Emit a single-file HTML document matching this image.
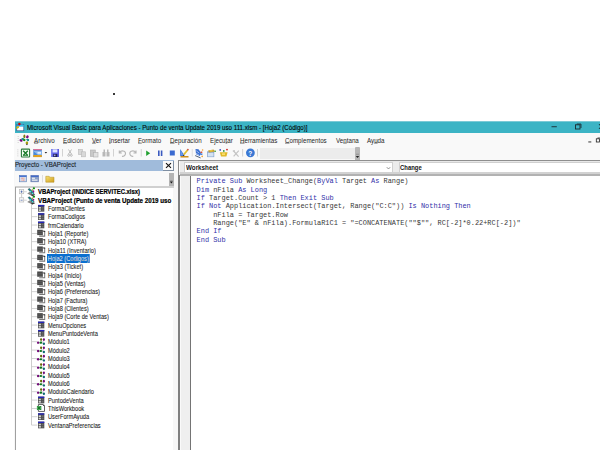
<!DOCTYPE html>
<html><head><meta charset="utf-8">
<style>
*{margin:0;padding:0;box-sizing:border-box}
html,body{width:600px;height:450px;overflow:hidden;background:#fff;position:relative;font-family:"Liberation Sans",sans-serif}
.a{position:absolute}
svg{position:absolute;left:0;top:0}
#dot{left:113px;top:93px;width:2px;height:2px;background:#383838}
#title{left:14.5px;top:121px;width:586px;height:12.5px;background:#3cb4c5}
.tt{position:absolute;left:26.5px;top:122.8px;font-size:6.9px;line-height:10px;color:#000;white-space:nowrap;transform-origin:0 50%;transform:scaleX(0.891);-webkit-text-stroke:0.1px #000}
#menu{left:14px;top:133px;width:586px;height:13px;background:#f9f9f9}
.mi{position:absolute;top:136px;font-size:6.9px;line-height:8px;color:#262626;white-space:nowrap;transform-origin:0 50%;transform:translateY(0.6px) scaleX(0.9)}
#tb{left:14px;top:146px;width:586px;height:14px;background:#f9f9f9}
#tbline{left:174px;top:160px;width:426px;height:1px;background:#8e8e8e}
#tbbox{left:260px;top:148px;width:100px;height:10.5px;background:#ececec}
#tbgrip{left:354.5px;top:147px;width:5.5px;height:13px;background:#b6b6b6;border-radius:1px 1px 0 0}
#projbg{left:14px;top:160px;width:164px;height:290px;background:#f7f7f7}
#ph{left:14.5px;top:160px;width:159.5px;height:11px;background:#a0bbdb}
.pht{position:absolute;left:15px;top:160px;font-size:7.3px;line-height:9px;color:#141a22;-webkit-text-stroke:0.1px #141a22;white-space:nowrap;transform-origin:0 50%;transform:scaleX(0.839)}
#px{left:163.3px;top:161px;width:10.7px;height:10px;background:#fbfbfb;border-right:1px solid #7e8ea2;border-bottom:1px solid #7e8ea2}
#ptb{left:15px;top:171px;width:159px;height:15px;background:#f9f9f9}
#pgrip{left:169px;top:173px;width:5px;height:13px;background:#b4b4b4}
#ptbline{left:15px;top:186px;width:159px;height:1.5px;background:#d0d0d0}
#tree{left:15px;top:187.5px;width:158px;height:263px;background:#fff;overflow:hidden}
#treeL{left:15px;top:187px;width:1px;height:263px;background:#a0a0a0}
#treeclip{left:0;top:0;width:173px;height:450px;overflow:hidden}
.r{position:absolute;font-size:6.5px;line-height:8px;color:#1a1a1a;-webkit-text-stroke:0.08px #1a1a1a;white-space:nowrap;transform-origin:0 50%;transform:scaleX(0.872)}
.rb{font-weight:bold;font-size:6.6px;transform:scaleX(0.893);color:#000;-webkit-text-stroke:0.2px #000}
.sel{background:#0a6fd0;color:#fff;padding:0.5px 1px;margin-left:-0.5px;margin-top:-0.5px}
#code{left:178px;top:160px;width:422px;height:290px;background:#ececec}
#codeL{left:178px;top:175px;width:2px;height:275px;background:#808080}
#codeL0{left:178px;top:160px;width:1px;height:15px;background:#8a8a8a}
#codeT{left:178px;top:160px;width:422px;height:1px;background:#8e8e8e}
#codeH{left:180px;top:161px;width:420px;height:1px;background:#e8e8e8}
#codeH2{left:179px;top:161px;width:1.2px;height:11px;background:#fafafa}
#codeH3{left:180px;top:175px;width:1px;height:275px;background:#fafafa}
.cb{position:absolute;top:162px;height:10px;background:#fff;border:1px solid #d0d0d0;border-bottom:0}
.cbt{position:absolute;top:163.6px;font-size:6.8px;line-height:8px;font-weight:bold;color:#141414;white-space:nowrap;transform-origin:0 50%}
#cband{left:180px;top:172px;width:420px;height:2.3px;background:#d2d2d2}
#cline{left:180px;top:174.3px;width:420px;height:1.5px;background:#b2b2b2}
#margin{left:181px;top:175.8px;width:9px;height:275px;background:#efefef}
#mline{left:190px;top:175.8px;width:1px;height:275px;background:#747474}
#ed{left:191px;top:175.8px;width:409px;height:275px;background:#fff}
.cl{position:absolute;left:196.6px;font-family:"Liberation Mono",monospace;font-size:6.93px;line-height:8px;color:#383838;white-space:pre}
.k{color:#3030a8}
.mi u{text-decoration:underline;text-decoration-thickness:0.5px;text-underline-offset:0.3px;text-decoration-color:#777}
</style></head><body>
<div id="dot" class="a"></div>
<div id="title" class="a"></div><div class="a" style="left:14.5px;top:121px;width:586px;height:1px;background:#7ccad6"></div>
<div class="tt">Microsoft Visual Basic para Aplicaciones - Punto de venta Update 2019 uso 111.xlsm - [Hoja2 (Código)]</div>
<div id="menu" class="a"></div>
<span class="mi" style="left:33.8px"><u>A</u>rchivo</span>
<span class="mi" style="left:63.4px"><u>E</u>dición</span>
<span class="mi" style="left:91.6px"><u>V</u>er</span>
<span class="mi" style="left:109px"><u>I</u>nsertar</span>
<span class="mi" style="left:138px"><u>F</u>ormato</span>
<span class="mi" style="left:170px"><u>D</u>epuración</span>
<span class="mi" style="left:210px">Ejecu<u>t</u>ar</span>
<span class="mi" style="left:240px"><u>H</u>erramientas</span>
<span class="mi" style="left:285.3px"><u>C</u>omplementos</span>
<span class="mi" style="left:336px">Ve<u>n</u>tana</span>
<span class="mi" style="left:367.3px">Ay<u>u</u>da</span>
<div id="tb" class="a"></div>
<div id="tbbox" class="a"></div>
<div id="tbgrip" class="a"></div>
<div id="tbline" class="a"></div>
<div id="projbg" class="a"></div>
<div id="ph" class="a"></div>
<div class="pht">Proyecto - VBAProject</div>
<div id="px" class="a"></div>
<div id="ptb" class="a"></div>
<div id="pgrip" class="a"></div>
<div id="ptbline" class="a"></div>
<div id="tree" class="a"></div>
<div id="treeL" class="a"></div>
<div id="code" class="a"></div>
<div id="codeL" class="a"></div><div id="codeT" class="a"></div><div id="codeH" class="a"></div><div id="codeH2" class="a"></div><div id="codeH3" class="a"></div><div id="codeL0" class="a"></div>
<div class="cb" style="left:184px;width:209px"></div>
<div class="cb" style="left:398.5px;width:210px"></div>
<div class="cbt" style="left:185.6px;transform:scaleX(0.924)">Worksheet</div>
<div class="cbt" style="left:400.3px;transform:scaleX(0.872)">Change</div>
<div id="cband" class="a"></div><div id="cline" class="a"></div>
<div id="margin" class="a"></div>
<div id="mline" class="a"></div>
<div id="ed" class="a"></div>
<div class="cl" style="top:177.30px"><span class="k">Private Sub</span> Worksheet_Change(<span class="k">ByVal</span> Target <span class="k">As</span> Range)</div>
<div class="cl" style="top:185.64px"><span class="k">Dim</span> nFila <span class="k">As Long</span></div>
<div class="cl" style="top:193.98px"><span class="k">If</span> Target.Count &gt; 1 <span class="k">Then Exit Sub</span></div>
<div class="cl" style="top:202.32px"><span class="k">If Not</span> Application.Intersect(Target, Range("C:C")) <span class="k">Is Nothing Then</span></div>
<div class="cl" style="top:210.66px">    nFila = Target.Row</div>
<div class="cl" style="top:219.00px">    Range("E" &amp; nFila).FormulaR1C1 = "=CONCATENATE(""$"", RC[-2]*0.22+RC[-2])"</div>
<div class="cl" style="top:227.34px"><span class="k">End If</span></div>
<div class="cl" style="top:235.68px"><span class="k">End Sub</span></div>
<div id="treeclip" class="a">
<div class="r rb" style="left:38px;top:188.20px">VBAProject (INDICE SERVITEC.xlsx)</div>
<div class="r rb" style="left:38px;top:196.53px;transform:scaleX(0.94)">VBAProject (Punto de venta Update 2019 uso 111.xlsm)</div>
<div class="r" style="left:47.5px;top:204.87px">FormaClientes</div>
<div class="r" style="left:47.5px;top:213.20px">FormaCodigos</div>
<div class="r" style="left:47.5px;top:221.54px">frmCalendario</div>
<div class="r" style="left:47.5px;top:229.88px">Hoja1 (Reporte)</div>
<div class="r" style="left:47.5px;top:238.21px">Hoja10 (XTRA)</div>
<div class="r" style="left:47.5px;top:246.54px">Hoja11 (Inventario)</div>
<div class="r sel" style="left:47.5px;top:254.88px">Hoja2 (Codigos)</div>
<div class="r" style="left:47.5px;top:263.22px">Hoja3 (Ticket)</div>
<div class="r" style="left:47.5px;top:271.55px">Hoja4 (Inicio)</div>
<div class="r" style="left:47.5px;top:279.88px">Hoja5 (Ventas)</div>
<div class="r" style="left:47.5px;top:288.22px">Hoja6 (Preferencias)</div>
<div class="r" style="left:47.5px;top:296.56px">Hoja7 (Factura)</div>
<div class="r" style="left:47.5px;top:304.89px">Hoja8 (Clientes)</div>
<div class="r" style="left:47.5px;top:313.23px">Hoja9 (Corte de Ventas)</div>
<div class="r" style="left:47.5px;top:321.56px">MenuOpciones</div>
<div class="r" style="left:47.5px;top:329.89px">MenuPuntodeVenta</div>
<div class="r" style="left:47.5px;top:338.23px">Módulo1</div>
<div class="r" style="left:47.5px;top:346.56px">Módulo2</div>
<div class="r" style="left:47.5px;top:354.90px">Módulo3</div>
<div class="r" style="left:47.5px;top:363.24px">Módulo4</div>
<div class="r" style="left:47.5px;top:371.57px">Módulo5</div>
<div class="r" style="left:47.5px;top:379.90px">Módulo6</div>
<div class="r" style="left:47.5px;top:388.24px">ModuloCalendario</div>
<div class="r" style="left:47.5px;top:396.58px">PuntodeVenta</div>
<div class="r" style="left:47.5px;top:404.91px">ThisWorkbook</div>
<div class="r" style="left:47.5px;top:413.25px">UserFormAyuda</div>
<div class="r" style="left:47.5px;top:421.58px">VentanaPreferencias</div>
</div>
<svg width="600" height="450" viewBox="0 0 600 450">
<!-- title icon -->
<rect x="16.8" y="124.6" width="7" height="6.2" fill="#fff" stroke="#2a4a80" stroke-width="0.6"/>
<rect x="16.8" y="124.6" width="7" height="1.9" fill="#2a90e0"/>
<rect x="20" y="124.8" width="3.5" height="1.4" fill="#30c8e8"/>
<ellipse cx="17.6" cy="127.4" rx="1.6" ry="1.1" transform="rotate(-35 17.6 127.4)" fill="#c8b810"/>
<circle cx="19.4" cy="123.9" r="1.25" fill="#d00808"/>
<!-- window controls -->
<rect x="551.5" y="126.3" width="5.3" height="0.9" fill="#1a2a30"/>
<rect x="575.5" y="124.8" width="4.5" height="4.2" fill="none" stroke="#1a2a30" stroke-width="0.9"/>
<path d="M576.8 124 L581 124 L581 128" fill="none" stroke="#1a2a30" stroke-width="0.8"/>
<path d="M599 124 L603 129 M603 124 L599 129" stroke="#1a2a30" stroke-width="0.9"/>
<!-- menu right small controls -->
<rect x="588.3" y="141.5" width="3" height="0.9" fill="#222"/>
<rect x="596.3" y="138.8" width="3.2" height="3.2" fill="none" stroke="#222" stroke-width="0.8"/>
<path d="M597.5 138 L600 138" stroke="#222" stroke-width="0.8"/>
<!-- grips -->
<g fill="#b8b8b8">
<rect x="17.7" y="136" width="0.9" height="0.7"/><rect x="17.7" y="138.1" width="0.9" height="0.7"/><rect x="17.7" y="140.2" width="0.9" height="0.7"/><rect x="17.7" y="142.3" width="0.9" height="0.7"/>
<rect x="17.5" y="149.5" width="0.8" height="0.8"/><rect x="17.5" y="151.5" width="0.8" height="0.8"/><rect x="17.5" y="153.5" width="0.8" height="0.8"/><rect x="17.5" y="155.5" width="0.8" height="0.8"/>
</g>
<!-- menu VBA icon -->
<g transform="translate(24.5 140) scale(1.15) translate(-24.5 -140)">
<ellipse cx="24.4" cy="136.9" rx="0.9" ry="1.6" fill="#7a7a10"/>
<ellipse cx="27" cy="137.2" rx="1.1" ry="1.3" transform="rotate(30 27 137.2)" fill="#7a0a80"/>
<ellipse cx="21.5" cy="140.3" rx="1.4" ry="1.1" transform="rotate(30 21.5 140.3)" fill="#7a0a80"/>
<ellipse cx="23" cy="139.2" rx="1.3" ry="0.9" fill="#108a90"/>
<ellipse cx="27.2" cy="140" rx="1.4" ry="1.1" fill="#108a90"/>
<ellipse cx="24.3" cy="140.1" rx="1.2" ry="1" fill="#108a10"/>
<rect x="25.6" y="139.8" width="1.2" height="1.2" fill="#e0f0f0"/>
<ellipse cx="26.6" cy="142.5" rx="1.1" ry="1.2" fill="#a8a010"/>
<rect x="26.1" y="143.4" width="1" height="1" fill="#222"/>
</g>
<!-- toolbar icons -->
<rect x="21.4" y="149.1" width="8.2" height="7.9" rx="0.6" fill="#f4fff4" stroke="#2a7a3a" stroke-width="1.1"/>
<path d="M23.2 150.8 L27.8 155.4 M27.8 150.8 L23.2 155.4" stroke="#1a7a2a" stroke-width="1.4"/><rect x="23" y="155" width="5" height="0.8" fill="#2a8a3a"/>
<rect x="33.3" y="149" width="8.5" height="8" fill="#4a8ad8"/>
<rect x="33.3" y="149" width="8.5" height="1.2" fill="#d8709a"/>
<rect x="33.3" y="155" width="8.5" height="2.1" fill="#e0a020"/>
<path d="M33.3 151 L41.8 151 L41.8 155 L38 155 Z" fill="#8ab8f0"/><rect x="37.5" y="152" width="3.5" height="1.8" fill="#e4eefc"/>
<path d="M44.6 152 L47.2 152 L45.9 153.4 Z" fill="#222"/>
<rect x="51" y="149" width="8" height="8" fill="#5c5ee0"/><rect x="51" y="149" width="1.5" height="8" fill="#7a80f0"/>
<rect x="52.6" y="149.3" width="4.8" height="3.2" fill="#e0e4ff"/>
<rect x="53.3" y="154" width="4" height="3" fill="#202058"/><rect x="54.2" y="154.6" width="1.2" height="1.6" fill="#c0c8f0"/>
<rect x="62.2" y="149" width="0.8" height="7.5" fill="#c8c8c8"/>
<g fill="none" stroke="#b4b4b4" stroke-width="0.9">
<path d="M68.5 149.5 L71.5 154 M71.5 149.5 L68.5 154"/>
<circle cx="68.7" cy="155.3" r="1"/><circle cx="71.3" cy="155.3" r="1"/>
</g>
<rect x="78.5" y="149.5" width="4" height="5" fill="#d8d8d8" stroke="#b8b8b8" stroke-width="0.6"/>
<rect x="81.5" y="151.8" width="4" height="5" fill="#d8d8d8" stroke="#b8b8b8" stroke-width="0.6"/>
<rect x="90.3" y="150" width="5" height="6.5" fill="#c8c8c8" stroke="#b0b0b0" stroke-width="0.6"/>
<rect x="93.5" y="152.5" width="4.5" height="4.5" fill="#e0e0e0" stroke="#b0b0b0" stroke-width="0.6"/>
<g fill="#b8b8b8"><rect x="102.5" y="152" width="3" height="4.5"/><rect x="106.5" y="152" width="3" height="4.5"/><rect x="103.5" y="149.5" width="1.5" height="3"/><rect x="107" y="149.5" width="1.5" height="3"/></g>
<rect x="113.2" y="149" width="0.8" height="7.5" fill="#c8c8c8"/>
<path d="M119.3 150.5 L119.3 153 L121.8 153 M119.6 152.7 C121 150 125.5 150.5 125.5 153.5 C125.5 155.5 123.5 156.5 122 156.3" fill="none" stroke="#b4b4b4" stroke-width="1.1"/>
<path d="M136 150.5 L136 153 L133.5 153 M135.7 152.7 C134.3 150 129.8 150.5 129.8 153.5 C129.8 155.5 131.8 156.5 133.3 156.3" fill="none" stroke="#b4b4b4" stroke-width="1.1"/>
<rect x="140.8" y="149" width="0.8" height="7.5" fill="#c8c8c8"/>
<path d="M146.2 150.5 L150.2 153.2 L146.2 156 Z" fill="#20a030"/>
<rect x="158" y="150.5" width="1.6" height="5.5" fill="#3a5ac0"/><rect x="160.8" y="150.5" width="1.6" height="5.5" fill="#3a5ac0"/>
<rect x="169.8" y="150.5" width="5" height="5" fill="#3a6ad0"/>
<path d="M180.2 149 L180.2 156 L184.8 156 Z" fill="#3a72d8"/>
<path d="M181 151 L181 155.3 L183.3 155.3 Z" fill="#6a9ae8"/>
<path d="M183.8 154.6 L187.6 150" stroke="#e0c030" stroke-width="1.7"/>
<circle cx="187.9" cy="149.6" r="0.9" fill="#d05040"/>
<rect x="183" y="155" width="1" height="0.9" fill="#333"/>
<rect x="180.5" y="156" width="8" height="1.5" fill="#d09018"/>
<rect x="191.8" y="149" width="0.8" height="7.5" fill="#d8d8d8"/>
<path d="M195.5 149 L198.5 149.3 L201 152.8 L199.8 156 L196 154.2 Z" fill="#3a70d0"/>
<path d="M196.3 150.8 L199.2 153 M196 153.2 L199 155.2" stroke="#e0e8ff" stroke-width="0.6"/>
<path d="M195.2 155.6 L200.6 157.9" stroke="#40506a" stroke-width="0.9"/>
<rect x="200.6" y="151.5" width="1.7" height="1.6" fill="#e05030"/>
<rect x="200.2" y="153.4" width="2.2" height="1.6" fill="#4a86e0"/>
<circle cx="202.6" cy="150" r="0.8" fill="#f0a030"/>
<circle cx="202.2" cy="156.4" r="0.8" fill="#f0a030"/>
<rect x="207.2" y="151.3" width="7" height="5.8" fill="#7a9ac8"/>
<rect x="207.8" y="152.6" width="5.8" height="4" fill="#d4e2f2"/>
<path d="M208 150.6 L213.5 149.6 L215.2 151.4 L209 152.4 Z" fill="#c8a030"/>
<rect x="210" y="150.2" width="2.5" height="1.2" fill="#f0d050"/>
<circle cx="215.2" cy="151.2" r="0.8" fill="#30a040"/>
<path d="M219.8 152.2 L227.6 152.2 L226.4 156.6 L221 156.6 Z" fill="#e0b828"/>
<rect x="222" y="153.3" width="3" height="1.8" fill="#f8e070"/>
<circle cx="220.2" cy="149.9" r="0.85" fill="#3040c0"/>
<circle cx="223.8" cy="150.9" r="0.85" fill="#209030"/>
<circle cx="227" cy="149.6" r="0.9" fill="#d02020"/>
<path d="M233.6 151 L238.6 156.6 M238.8 150.6 L233.6 156.4" stroke="#c4c4c4" stroke-width="1.2"/>
<rect x="232.8" y="150.2" width="2.2" height="1.6" fill="#c8c8c8"/>
<rect x="242.3" y="149" width="0.8" height="7.5" fill="#c8c8c8"/>
<circle cx="250.4" cy="152.8" r="4.4" fill="#3a78d4"/>
<text x="250.3" y="155.6" font-family="Liberation Sans" font-weight="bold" font-size="6.5" fill="#fff" text-anchor="middle">?</text>
<rect x="257.2" y="149" width="0.8" height="7.5" fill="#c8c8c8"/>
<rect x="356" y="153.8" width="3" height="0.8" fill="#888"/><path d="M355.8 156 L359.2 156 L357.5 158 Z" fill="#222"/>
<!-- project header X -->
<path d="M166 163.2 L171 167.8 M171 163.2 L166 167.8" stroke="#111" stroke-width="1.1"/>
<!-- project toolbar icons -->
<rect x="19.3" y="175.6" width="7.2" height="6.2" fill="#d0dcf0" stroke="#5a7ab0" stroke-width="0.6"/>
<rect x="19.3" y="175.6" width="7.2" height="1.3" fill="#3a6ad0"/>
<rect x="21.3" y="177.6" width="1.5" height="1.5" fill="#e8a0a0"/><rect x="23" y="177.6" width="1.5" height="1.5" fill="#f0c0a0"/><rect x="21.3" y="179.4" width="1.5" height="1.5" fill="#f0c0b0"/><rect x="23" y="179.4" width="1.5" height="1.5" fill="#e8a8a8"/>
<rect x="30.9" y="175.6" width="7.6" height="6.2" fill="#8aa0c8" stroke="#5a70a8" stroke-width="0.6"/>
<rect x="30.9" y="175.6" width="7.6" height="1.3" fill="#3a64c8"/>
<rect x="32" y="177.7" width="3" height="1.1" fill="#f4f4f4"/><rect x="32" y="179.6" width="5.5" height="1.1" fill="#f4f4f4"/>
<rect x="42.2" y="175" width="0.8" height="7.5" fill="#d8d8d8"/>
<defs><linearGradient id="fg" x1="0" y1="0" x2="1" y2="1"><stop offset="0" stop-color="#f8e070"/><stop offset="1" stop-color="#d0a020"/></linearGradient></defs>
<path d="M45.8 176.3 L49 176.3 L50 177.2 L54 177.2 L54 182.2 L45.8 182.2 Z" fill="url(#fg)" stroke="#b08a20" stroke-width="0.5"/>
<rect x="170.2" y="180" width="2.4" height="0.7" fill="#888"/><path d="M169.9 181.6 L172.9 181.6 L171.4 183.4 Z" fill="#111"/>
<!-- combo chevron -->
<path d="M386.8 167.2 L388.5 169 L390.2 167.2" fill="none" stroke="#666" stroke-width="0.7"/>
<!-- tree -->
<rect x="31" y="203.5" width="0.9" height="221.58000000000004" fill="#c8c8c8"/>
<rect x="21.2" y="193.7" width="0.9" height="4.3" fill="#c8c8c8"/>
<rect x="19.5" y="189.39999999999998" width="4.2" height="4.3" fill="#f6f6f6" stroke="#bdbdbd" stroke-width="0.7"/>
<rect x="20.6" y="191.5" width="2" height="0.6" fill="#3050a0"/>
<rect x="21.3" y="190.5" width="0.6" height="2.4" fill="#3050a0"/>
<rect x="23.8" y="191.39999999999998" width="3" height="0.8" fill="#c8c8c8"/>
<path d="M27.2 193.6 L29.8 191.8 L35.2 194.6 L32.4 196.2 Z" fill="#8a8a8a"/><path d="M30.5 194.5 L35.2 194.6 L32.4 196.2 Z" fill="#3a3a3a"/><path d="M28 189.2 L29.6 188.4 L34.2 193.2 L32.6 194.2 Z" fill="#0e7e86" stroke="#203030" stroke-width="0.4"/><rect x="29.9" y="190.9" width="1.3" height="1.3" fill="#50e8e8"/><rect x="31.9" y="192.8" width="1.3" height="1.3" fill="#50e8e8"/><circle cx="33.9" cy="188.3" r="1.15" fill="#108a10"/><circle cx="32.3" cy="189.9" r="0.75" fill="#8a8a10"/><ellipse cx="33.5" cy="191.4" rx="0.8" ry="1.1" fill="#8a108a"/>
<rect x="19.5" y="197.73499999999999" width="4.2" height="4.3" fill="#f6f6f6" stroke="#bdbdbd" stroke-width="0.7"/>
<rect x="20.6" y="199.835" width="2" height="0.6" fill="#3050a0"/>
<rect x="23.8" y="199.73499999999999" width="3" height="0.8" fill="#c8c8c8"/>
<path d="M27.2 201.935 L29.8 200.13500000000002 L35.2 202.935 L32.4 204.535 Z" fill="#8a8a8a"/><path d="M30.5 202.835 L35.2 202.935 L32.4 204.535 Z" fill="#3a3a3a"/><path d="M28 197.535 L29.6 196.735 L34.2 201.535 L32.6 202.535 Z" fill="#0e7e86" stroke="#203030" stroke-width="0.4"/><rect x="29.9" y="199.235" width="1.3" height="1.3" fill="#50e8e8"/><rect x="31.9" y="201.13500000000002" width="1.3" height="1.3" fill="#50e8e8"/><circle cx="33.9" cy="196.63500000000002" r="1.15" fill="#108a10"/><circle cx="32.3" cy="198.235" r="0.75" fill="#8a8a10"/><ellipse cx="33.5" cy="199.735" rx="0.8" ry="1.1" fill="#8a108a"/>
<rect x="31.5" y="207.97" width="5.8" height="0.8" fill="#c8c8c8"/>
<rect x="38" y="204.92000000000002" width="6.3" height="6.7" fill="#4a4a4a"/><rect x="38" y="204.92000000000002" width="6.3" height="1.4" fill="#2626b8"/><rect x="38.7" y="207.02" width="2.2" height="1.6" fill="#d4d4d4"/><rect x="38.7" y="209.32000000000002" width="2.2" height="1.6" fill="#d4d4d4"/><rect x="41.6" y="207.02" width="2" height="1.6" fill="#6a6a6a"/><rect x="41.6" y="209.32000000000002" width="2" height="1.6" fill="#6a6a6a"/>
<rect x="31.5" y="216.30499999999998" width="5.8" height="0.8" fill="#c8c8c8"/>
<rect x="38" y="213.255" width="6.3" height="6.7" fill="#4a4a4a"/><rect x="38" y="213.255" width="6.3" height="1.4" fill="#2626b8"/><rect x="38.7" y="215.355" width="2.2" height="1.6" fill="#d4d4d4"/><rect x="38.7" y="217.655" width="2.2" height="1.6" fill="#d4d4d4"/><rect x="41.6" y="215.355" width="2" height="1.6" fill="#6a6a6a"/><rect x="41.6" y="217.655" width="2" height="1.6" fill="#6a6a6a"/>
<rect x="31.5" y="224.64" width="5.8" height="0.8" fill="#c8c8c8"/>
<rect x="38" y="221.59" width="6.3" height="6.7" fill="#4a4a4a"/><rect x="38" y="221.59" width="6.3" height="1.4" fill="#2626b8"/><rect x="38.7" y="223.69" width="2.2" height="1.6" fill="#d4d4d4"/><rect x="38.7" y="225.99" width="2.2" height="1.6" fill="#d4d4d4"/><rect x="41.6" y="223.69" width="2" height="1.6" fill="#6a6a6a"/><rect x="41.6" y="225.99" width="2" height="1.6" fill="#6a6a6a"/>
<rect x="31.5" y="232.975" width="5.8" height="0.8" fill="#c8c8c8"/>
<path d="M42.6 230.575 L44.4 230.575 L45.2 231.575 L45.2 236.675 L39.2 236.675 L39.2 235.575 L42.6 235.575 Z" fill="#777"/><rect x="42.7" y="231.975" width="1.5" height="3.6" fill="#fff"/><rect x="37.2" y="229.775" width="5.6" height="5.3" fill="#4a4a4a"/><rect x="37.2" y="231.375" width="5.6" height="0.5" fill="#666"/><rect x="37.2" y="233.075" width="5.6" height="0.5" fill="#666"/><rect x="44.2" y="230.975" width="1" height="1" fill="#222"/>
<rect x="31.5" y="241.30999999999997" width="5.8" height="0.8" fill="#c8c8c8"/>
<path d="M42.6 238.90999999999997 L44.4 238.90999999999997 L45.2 239.90999999999997 L45.2 245.01 L39.2 245.01 L39.2 243.90999999999997 L42.6 243.90999999999997 Z" fill="#777"/><rect x="42.7" y="240.30999999999997" width="1.5" height="3.6" fill="#fff"/><rect x="37.2" y="238.10999999999999" width="5.6" height="5.3" fill="#4a4a4a"/><rect x="37.2" y="239.70999999999998" width="5.6" height="0.5" fill="#666"/><rect x="37.2" y="241.40999999999997" width="5.6" height="0.5" fill="#666"/><rect x="44.2" y="239.30999999999997" width="1" height="1" fill="#222"/>
<rect x="31.5" y="249.64499999999998" width="5.8" height="0.8" fill="#c8c8c8"/>
<path d="M42.6 247.24499999999998 L44.4 247.24499999999998 L45.2 248.24499999999998 L45.2 253.345 L39.2 253.345 L39.2 252.24499999999998 L42.6 252.24499999999998 Z" fill="#777"/><rect x="42.7" y="248.64499999999998" width="1.5" height="3.6" fill="#fff"/><rect x="37.2" y="246.445" width="5.6" height="5.3" fill="#4a4a4a"/><rect x="37.2" y="248.045" width="5.6" height="0.5" fill="#666"/><rect x="37.2" y="249.74499999999998" width="5.6" height="0.5" fill="#666"/><rect x="44.2" y="247.64499999999998" width="1" height="1" fill="#222"/>
<rect x="31.5" y="257.98" width="5.8" height="0.8" fill="#c8c8c8"/>
<path d="M42.6 255.57999999999998 L44.4 255.57999999999998 L45.2 256.58 L45.2 261.68 L39.2 261.68 L39.2 260.58 L42.6 260.58 Z" fill="#777"/><rect x="42.7" y="256.98" width="1.5" height="3.6" fill="#fff"/><rect x="37.2" y="254.78" width="5.6" height="5.3" fill="#4a4a4a"/><rect x="37.2" y="256.38" width="5.6" height="0.5" fill="#666"/><rect x="37.2" y="258.08" width="5.6" height="0.5" fill="#666"/><rect x="44.2" y="255.98" width="1" height="1" fill="#222"/>
<rect x="31.5" y="266.31500000000005" width="5.8" height="0.8" fill="#c8c8c8"/>
<path d="M42.6 263.915 L44.4 263.915 L45.2 264.915 L45.2 270.01500000000004 L39.2 270.01500000000004 L39.2 268.915 L42.6 268.915 Z" fill="#777"/><rect x="42.7" y="265.31500000000005" width="1.5" height="3.6" fill="#fff"/><rect x="37.2" y="263.115" width="5.6" height="5.3" fill="#4a4a4a"/><rect x="37.2" y="264.71500000000003" width="5.6" height="0.5" fill="#666"/><rect x="37.2" y="266.415" width="5.6" height="0.5" fill="#666"/><rect x="44.2" y="264.31500000000005" width="1" height="1" fill="#222"/>
<rect x="31.5" y="274.65000000000003" width="5.8" height="0.8" fill="#c8c8c8"/>
<path d="M42.6 272.25 L44.4 272.25 L45.2 273.25 L45.2 278.35 L39.2 278.35 L39.2 277.25 L42.6 277.25 Z" fill="#777"/><rect x="42.7" y="273.65000000000003" width="1.5" height="3.6" fill="#fff"/><rect x="37.2" y="271.45" width="5.6" height="5.3" fill="#4a4a4a"/><rect x="37.2" y="273.05" width="5.6" height="0.5" fill="#666"/><rect x="37.2" y="274.75" width="5.6" height="0.5" fill="#666"/><rect x="44.2" y="272.65000000000003" width="1" height="1" fill="#222"/>
<rect x="31.5" y="282.985" width="5.8" height="0.8" fill="#c8c8c8"/>
<path d="M42.6 280.585 L44.4 280.585 L45.2 281.585 L45.2 286.685 L39.2 286.685 L39.2 285.585 L42.6 285.585 Z" fill="#777"/><rect x="42.7" y="281.985" width="1.5" height="3.6" fill="#fff"/><rect x="37.2" y="279.78499999999997" width="5.6" height="5.3" fill="#4a4a4a"/><rect x="37.2" y="281.385" width="5.6" height="0.5" fill="#666"/><rect x="37.2" y="283.085" width="5.6" height="0.5" fill="#666"/><rect x="44.2" y="280.985" width="1" height="1" fill="#222"/>
<rect x="31.5" y="291.32000000000005" width="5.8" height="0.8" fill="#c8c8c8"/>
<path d="M42.6 288.92 L44.4 288.92 L45.2 289.92 L45.2 295.02000000000004 L39.2 295.02000000000004 L39.2 293.92 L42.6 293.92 Z" fill="#777"/><rect x="42.7" y="290.32000000000005" width="1.5" height="3.6" fill="#fff"/><rect x="37.2" y="288.12" width="5.6" height="5.3" fill="#4a4a4a"/><rect x="37.2" y="289.72" width="5.6" height="0.5" fill="#666"/><rect x="37.2" y="291.42" width="5.6" height="0.5" fill="#666"/><rect x="44.2" y="289.32000000000005" width="1" height="1" fill="#222"/>
<rect x="31.5" y="299.65500000000003" width="5.8" height="0.8" fill="#c8c8c8"/>
<path d="M42.6 297.255 L44.4 297.255 L45.2 298.255 L45.2 303.355 L39.2 303.355 L39.2 302.255 L42.6 302.255 Z" fill="#777"/><rect x="42.7" y="298.65500000000003" width="1.5" height="3.6" fill="#fff"/><rect x="37.2" y="296.455" width="5.6" height="5.3" fill="#4a4a4a"/><rect x="37.2" y="298.055" width="5.6" height="0.5" fill="#666"/><rect x="37.2" y="299.755" width="5.6" height="0.5" fill="#666"/><rect x="44.2" y="297.65500000000003" width="1" height="1" fill="#222"/>
<rect x="31.5" y="307.99" width="5.8" height="0.8" fill="#c8c8c8"/>
<path d="M42.6 305.59 L44.4 305.59 L45.2 306.59 L45.2 311.69 L39.2 311.69 L39.2 310.59 L42.6 310.59 Z" fill="#777"/><rect x="42.7" y="306.99" width="1.5" height="3.6" fill="#fff"/><rect x="37.2" y="304.78999999999996" width="5.6" height="5.3" fill="#4a4a4a"/><rect x="37.2" y="306.39" width="5.6" height="0.5" fill="#666"/><rect x="37.2" y="308.09" width="5.6" height="0.5" fill="#666"/><rect x="44.2" y="305.99" width="1" height="1" fill="#222"/>
<rect x="31.5" y="316.32500000000005" width="5.8" height="0.8" fill="#c8c8c8"/>
<path d="M42.6 313.925 L44.4 313.925 L45.2 314.925 L45.2 320.02500000000003 L39.2 320.02500000000003 L39.2 318.925 L42.6 318.925 Z" fill="#777"/><rect x="42.7" y="315.32500000000005" width="1.5" height="3.6" fill="#fff"/><rect x="37.2" y="313.125" width="5.6" height="5.3" fill="#4a4a4a"/><rect x="37.2" y="314.725" width="5.6" height="0.5" fill="#666"/><rect x="37.2" y="316.425" width="5.6" height="0.5" fill="#666"/><rect x="44.2" y="314.32500000000005" width="1" height="1" fill="#222"/>
<rect x="31.5" y="324.66" width="5.8" height="0.8" fill="#c8c8c8"/>
<rect x="38" y="321.61" width="6.3" height="6.7" fill="#4a4a4a"/><rect x="38" y="321.61" width="6.3" height="1.4" fill="#2626b8"/><rect x="38.7" y="323.71000000000004" width="2.2" height="1.6" fill="#d4d4d4"/><rect x="38.7" y="326.01" width="2.2" height="1.6" fill="#d4d4d4"/><rect x="41.6" y="323.71000000000004" width="2" height="1.6" fill="#6a6a6a"/><rect x="41.6" y="326.01" width="2" height="1.6" fill="#6a6a6a"/>
<rect x="31.5" y="332.995" width="5.8" height="0.8" fill="#c8c8c8"/>
<rect x="38" y="329.945" width="6.3" height="6.7" fill="#4a4a4a"/><rect x="38" y="329.945" width="6.3" height="1.4" fill="#2626b8"/><rect x="38.7" y="332.045" width="2.2" height="1.6" fill="#d4d4d4"/><rect x="38.7" y="334.34499999999997" width="2.2" height="1.6" fill="#d4d4d4"/><rect x="41.6" y="332.045" width="2" height="1.6" fill="#6a6a6a"/><rect x="41.6" y="334.34499999999997" width="2" height="1.6" fill="#6a6a6a"/>
<rect x="31.5" y="341.33000000000004" width="5.8" height="0.8" fill="#c8c8c8"/>
<path d="M38.5 342.63 L43.9 343.73 M41.1 339.53000000000003 L41.5 342.73 M43.9 339.53000000000003 L42.5 342.93" stroke="#999" stroke-width="0.5"/><ellipse cx="41.1" cy="339.43" rx="1.1" ry="1.25" fill="#6a6a0a"/><ellipse cx="43.9" cy="339.53" rx="1.05" ry="1.35" fill="#720a78"/><ellipse cx="38.1" cy="342.63" rx="1.15" ry="1.2" fill="#720a78"/><ellipse cx="40.8" cy="342.63" rx="1.3" ry="1.05" fill="#0a7a1a"/><ellipse cx="43.9" cy="343.73" rx="1.1" ry="1.2" fill="#0a6a72"/>
<rect x="31.5" y="349.665" width="5.8" height="0.8" fill="#c8c8c8"/>
<path d="M38.5 350.965 L43.9 352.065 M41.1 347.865 L41.5 351.065 M43.9 347.865 L42.5 351.265" stroke="#999" stroke-width="0.5"/><ellipse cx="41.1" cy="347.76" rx="1.1" ry="1.25" fill="#6a6a0a"/><ellipse cx="43.9" cy="347.87" rx="1.05" ry="1.35" fill="#720a78"/><ellipse cx="38.1" cy="350.96" rx="1.15" ry="1.2" fill="#720a78"/><ellipse cx="40.8" cy="350.96" rx="1.3" ry="1.05" fill="#0a7a1a"/><ellipse cx="43.9" cy="352.06" rx="1.1" ry="1.2" fill="#0a6a72"/>
<rect x="31.5" y="358.0" width="5.8" height="0.8" fill="#c8c8c8"/>
<path d="M38.5 359.29999999999995 L43.9 360.4 M41.1 356.2 L41.5 359.4 M43.9 356.2 L42.5 359.59999999999997" stroke="#999" stroke-width="0.5"/><ellipse cx="41.1" cy="356.10" rx="1.1" ry="1.25" fill="#6a6a0a"/><ellipse cx="43.9" cy="356.20" rx="1.05" ry="1.35" fill="#720a78"/><ellipse cx="38.1" cy="359.30" rx="1.15" ry="1.2" fill="#720a78"/><ellipse cx="40.8" cy="359.30" rx="1.3" ry="1.05" fill="#0a7a1a"/><ellipse cx="43.9" cy="360.40" rx="1.1" ry="1.2" fill="#0a6a72"/>
<rect x="31.5" y="366.33500000000004" width="5.8" height="0.8" fill="#c8c8c8"/>
<path d="M38.5 367.635 L43.9 368.735 M41.1 364.535 L41.5 367.735 M43.9 364.535 L42.5 367.935" stroke="#999" stroke-width="0.5"/><ellipse cx="41.1" cy="364.44" rx="1.1" ry="1.25" fill="#6a6a0a"/><ellipse cx="43.9" cy="364.54" rx="1.05" ry="1.35" fill="#720a78"/><ellipse cx="38.1" cy="367.63" rx="1.15" ry="1.2" fill="#720a78"/><ellipse cx="40.8" cy="367.63" rx="1.3" ry="1.05" fill="#0a7a1a"/><ellipse cx="43.9" cy="368.74" rx="1.1" ry="1.2" fill="#0a6a72"/>
<rect x="31.5" y="374.67" width="5.8" height="0.8" fill="#c8c8c8"/>
<path d="M38.5 375.96999999999997 L43.9 377.07 M41.1 372.87 L41.5 376.07 M43.9 372.87 L42.5 376.27" stroke="#999" stroke-width="0.5"/><ellipse cx="41.1" cy="372.77" rx="1.1" ry="1.25" fill="#6a6a0a"/><ellipse cx="43.9" cy="372.87" rx="1.05" ry="1.35" fill="#720a78"/><ellipse cx="38.1" cy="375.97" rx="1.15" ry="1.2" fill="#720a78"/><ellipse cx="40.8" cy="375.97" rx="1.3" ry="1.05" fill="#0a7a1a"/><ellipse cx="43.9" cy="377.07" rx="1.1" ry="1.2" fill="#0a6a72"/>
<rect x="31.5" y="383.005" width="5.8" height="0.8" fill="#c8c8c8"/>
<path d="M38.5 384.30499999999995 L43.9 385.405 M41.1 381.205 L41.5 384.405 M43.9 381.205 L42.5 384.60499999999996" stroke="#999" stroke-width="0.5"/><ellipse cx="41.1" cy="381.10" rx="1.1" ry="1.25" fill="#6a6a0a"/><ellipse cx="43.9" cy="381.20" rx="1.05" ry="1.35" fill="#720a78"/><ellipse cx="38.1" cy="384.30" rx="1.15" ry="1.2" fill="#720a78"/><ellipse cx="40.8" cy="384.30" rx="1.3" ry="1.05" fill="#0a7a1a"/><ellipse cx="43.9" cy="385.40" rx="1.1" ry="1.2" fill="#0a6a72"/>
<rect x="31.5" y="391.34000000000003" width="5.8" height="0.8" fill="#c8c8c8"/>
<path d="M38.5 392.64 L43.9 393.74 M41.1 389.54 L41.5 392.74 M43.9 389.54 L42.5 392.94" stroke="#999" stroke-width="0.5"/><ellipse cx="41.1" cy="389.44" rx="1.1" ry="1.25" fill="#6a6a0a"/><ellipse cx="43.9" cy="389.54" rx="1.05" ry="1.35" fill="#720a78"/><ellipse cx="38.1" cy="392.64" rx="1.15" ry="1.2" fill="#720a78"/><ellipse cx="40.8" cy="392.64" rx="1.3" ry="1.05" fill="#0a7a1a"/><ellipse cx="43.9" cy="393.74" rx="1.1" ry="1.2" fill="#0a6a72"/>
<rect x="31.5" y="399.67500000000007" width="5.8" height="0.8" fill="#c8c8c8"/>
<rect x="38" y="396.62500000000006" width="6.3" height="6.7" fill="#4a4a4a"/><rect x="38" y="396.62500000000006" width="6.3" height="1.4" fill="#2626b8"/><rect x="38.7" y="398.7250000000001" width="2.2" height="1.6" fill="#d4d4d4"/><rect x="38.7" y="401.02500000000003" width="2.2" height="1.6" fill="#d4d4d4"/><rect x="41.6" y="398.7250000000001" width="2" height="1.6" fill="#6a6a6a"/><rect x="41.6" y="401.02500000000003" width="2" height="1.6" fill="#6a6a6a"/>
<rect x="31.5" y="408.01000000000005" width="5.8" height="0.8" fill="#c8c8c8"/>
<path d="M38.4 404.41 L43 404.41 L44.5 405.91 L44.5 411.41 L38.4 411.41 Z" fill="#fff" stroke="#3a3a3a" stroke-width="0.8"/><rect x="43.2" y="404.71" width="1.1" height="1.1" fill="#111"/><rect x="36.9" y="406.01" width="4.5" height="4" fill="#4aaa5a"/><path d="M37.6 406.51 L40.7 409.51 M40.7 406.51 L37.6 409.51" stroke="#0a6a1a" stroke-width="0.9"/>
<rect x="31.5" y="416.345" width="5.8" height="0.8" fill="#c8c8c8"/>
<rect x="38" y="413.295" width="6.3" height="6.7" fill="#4a4a4a"/><rect x="38" y="413.295" width="6.3" height="1.4" fill="#2626b8"/><rect x="38.7" y="415.39500000000004" width="2.2" height="1.6" fill="#d4d4d4"/><rect x="38.7" y="417.695" width="2.2" height="1.6" fill="#d4d4d4"/><rect x="41.6" y="415.39500000000004" width="2" height="1.6" fill="#6a6a6a"/><rect x="41.6" y="417.695" width="2" height="1.6" fill="#6a6a6a"/>
<rect x="31.5" y="424.68000000000006" width="5.8" height="0.8" fill="#c8c8c8"/>
<rect x="38" y="421.63000000000005" width="6.3" height="6.7" fill="#4a4a4a"/><rect x="38" y="421.63000000000005" width="6.3" height="1.4" fill="#2626b8"/><rect x="38.7" y="423.7300000000001" width="2.2" height="1.6" fill="#d4d4d4"/><rect x="38.7" y="426.03000000000003" width="2.2" height="1.6" fill="#d4d4d4"/><rect x="41.6" y="423.7300000000001" width="2" height="1.6" fill="#6a6a6a"/><rect x="41.6" y="426.03000000000003" width="2" height="1.6" fill="#6a6a6a"/>
</svg>
</body></html>
